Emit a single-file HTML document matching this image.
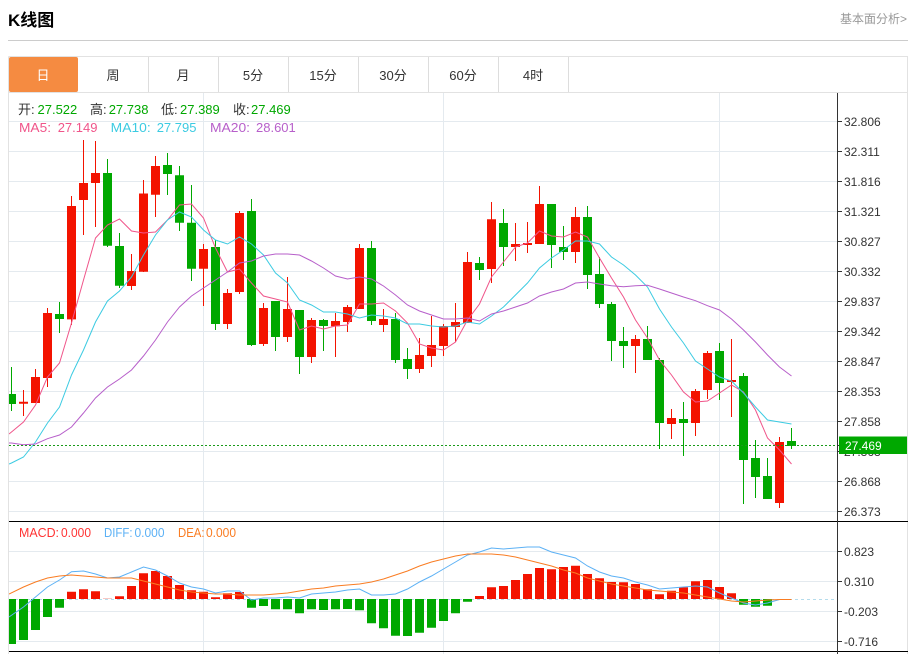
<!DOCTYPE html>
<html lang="zh"><head><meta charset="utf-8"><title>K线图</title>
<style>
html,body{margin:0;padding:0;background:#fff;width:914px;height:654px;overflow:hidden}
svg{display:block;position:absolute;left:0;top:0}
text{font-family:"Liberation Sans","Noto Sans CJK SC",sans-serif}
</style></head><body>
<svg width="914" height="654" viewBox="0 0 914 654" xmlns="http://www.w3.org/2000/svg">
<defs><clipPath id="c"><rect x="9" y="93" width="828" height="560"/></clipPath></defs>
<text x="8" y="26" font-size="17" font-weight="700" fill="#000">K线图</text>
<text x="840" y="23" font-size="12" fill="#999">基本面分析&gt;</text>
<path d="M8 40.5H908" stroke="#ccc" fill="none"/>
<path d="M8.5 56.5H907.5V654M8.5 56.5V654M9 92.5H908" stroke="#e2e2e2" fill="none"/>
<path d="M148.5 57V92M218.5 57V92M288.5 57V92M358.5 57V92M428.5 57V92M498.5 57V92M568.5 57V92" stroke="#ddd" fill="none"/>
<rect x="9" y="57" width="69" height="35" rx="2" fill="#f58b41"/>
<g font-size="13" text-anchor="middle" fill="#333">
<text x="43" y="80" fill="#fff">日</text><text x="113" y="80">周</text><text x="183" y="80">月</text><text x="253" y="80">5分</text><text x="323" y="80">15分</text><text x="393" y="80">30分</text><text x="463" y="80">60分</text><text x="533" y="80">4时</text>
</g>
<path stroke="#e4eaef" fill="none" d="M9 121.5H837M9 151.5H837M9 181.5H837M9 211.5H837M9 241.5H837M9 271.5H837M9 301.5H837M9 331.5H837M9 361.5H837M9 391.5H837M9 421.5H837M9 451.5H837M9 481.5H837M9 511.5H837M9 551.5H837M9 581.5H837M9 611.5H837M9 641.5H837M203.5 93V654M443.5 93V654M719.5 93V654"/>
<g clip-path="url(#c)">
<path stroke="#f31300" fill="none" d="M23.5 390V416M35.5 369V403M47.5 308V387M71.5 196V325M83.5 140V235M95.5 141V227M131.5 254V290M143.5 180V272M155.5 156V217M203.5 244V306M227.5 289V329M239.5 211V294M263.5 303V346M287.5 277V342M311.5 318V363M335.5 313V357M347.5 305V332M359.5 244V309M383.5 309V332M419.5 338V373M431.5 316V367M443.5 324V356M455.5 303V342M467.5 252V323M491.5 202V283M515.5 223V261M527.5 222V253M539.5 186V244M575.5 207V263M635.5 335V373M671.5 409V439M695.5 389V436M707.5 351V399M731.5 339V417M779.5 437V508"/>
<path stroke="#00a800" fill="none" d="M11.5 367V411M59.5 302V333M107.5 159V247M119.5 233V288M167.5 153V195M179.5 166V231M191.5 185V281M215.5 240V330M251.5 199V346M275.5 301V351M299.5 310V374M323.5 319V351M371.5 241V325M395.5 313V363M407.5 348V379M479.5 257V280M503.5 209V266M551.5 204V268M563.5 226V260M587.5 206V289M599.5 257V308M611.5 302V361M623.5 327V368M647.5 326V360M659.5 358V449M683.5 402V456M719.5 343V400M743.5 373V504M755.5 440V498M767.5 458V499M791.5 428V449"/>
<path fill="#f31300" d="M19 401.7h9v2h-9zM31 377h9v26h-9zM43 313h9v65h-9zM67 206h9v113.4h-9zM79 183h9v17h-9zM91 173h9v10h-9zM127 271h9v15h-9zM139 193.5h9v78.2h-9zM151 166h9v28.7h-9zM199 249h9v19.7h-9zM223 293h9v31h-9zM235 213h9v79h-9zM259 308h9v36h-9zM283 309h9v28h-9zM307 320h9v37h-9zM331 321h9v5.3h-9zM343 307h9v15h-9zM355 248h9v61h-9zM379 319h9v6h-9zM415 355h9v14h-9zM427 345h9v11h-9zM439 326h9v20h-9zM451 322h9v5h-9zM463 262h9v61h-9zM487 219.3h9v49.7h-9zM511 244h9v3h-9zM523 243h9v2h-9zM535 204h9v40h-9zM571 217h9v35h-9zM631 339h9v7h-9zM667 418h9v6h-9zM691 391h9v32h-9zM703 353h9v37h-9zM727 380h9v2h-9zM775 442h9v61h-9z"/>
<path fill="#00a800" d="M7 394h9v10h-9zM55 314h9v5h-9zM103 173h9v72.7h-9zM115 246h9v39.7h-9zM163 165h9v9h-9zM175 175.3h9v47.4h-9zM187 222.7h9v46h-9zM211 247h9v77h-9zM247 211h9v134h-9zM271 301h9v36h-9zM295 310h9v47h-9zM319 320h9v6h-9zM367 248h9v73h-9zM391 319h9v41h-9zM403 359h9v10h-9zM475 263h9v7h-9zM499 223h9v24h-9zM547 204h9v41h-9zM559 247h9v5h-9zM583 217h9v58h-9zM595 274h9v30h-9zM607 304h9v37h-9zM619 341h9v5h-9zM643 339h9v21h-9zM655 360h9v63h-9zM679 419h9v4h-9zM715 351h9v32h-9zM739 376h9v84h-9zM751 458h9v19h-9zM763 476h9v23h-9zM787 441h9v5h-9z"/>
<polyline fill="none" stroke="#f0558a" points="9,434 11.5,432 23.5,422 35.5,405 47.5,377 59.5,363 71.5,323 83.5,280 95.5,238 107.5,225 119.5,219 131.5,231 143.5,233 155.5,232 167.5,220 179.5,205 191.5,204 203.5,218 215.5,248 227.5,272 239.5,269 251.5,283 263.5,296 275.5,299 287.5,302 299.5,330 311.5,326 323.5,329 335.5,326 347.5,325 359.5,304 371.5,304 383.5,303 395.5,311 407.5,323 419.5,344 431.5,348 443.5,350 455.5,342 467.5,320 479.5,304 491.5,277 503.5,262 515.5,247 527.5,243 539.5,231 551.5,236 563.5,237 575.5,232 587.5,237 599.5,258 611.5,278 623.5,297 635.5,320 647.5,338 659.5,360 671.5,375 683.5,392 695.5,402 707.5,401 719.5,393 731.5,385 743.5,392 755.5,410 767.5,438 779.5,450 791.5,464"/>
<polyline fill="none" stroke="#3ccbe2" points="9,464 11.5,463 23.5,457 35.5,442 47.5,423 59.5,407 71.5,375 83.5,350 95.5,322 107.5,301 119.5,291 131.5,277 143.5,255 155.5,235 167.5,220 179.5,212 191.5,217 203.5,230 215.5,240 227.5,244 239.5,237 251.5,244 263.5,255 275.5,273 287.5,283 299.5,300 311.5,305 323.5,312 335.5,312 347.5,314 359.5,318 371.5,315 383.5,316 395.5,318 407.5,324 419.5,324 431.5,326 443.5,327 455.5,326 467.5,322 479.5,324 491.5,316 503.5,307 515.5,295 527.5,283 539.5,268 551.5,258 563.5,250 575.5,241 587.5,241 599.5,244 611.5,257 623.5,265 635.5,275 647.5,287 659.5,309 671.5,327 683.5,343 695.5,361 707.5,369 719.5,377 731.5,381 743.5,393 755.5,407 767.5,420 779.5,422 791.5,424"/>
<polyline fill="none" stroke="#b75fca" points="9,443 11.5,443 23.5,444.7 35.5,444 47.5,438.7 59.5,435 71.5,427 83.5,413 95.5,398 107.5,387 119.5,379 131.5,370 143.5,356 155.5,340 167.5,322 179.5,307 191.5,296 203.5,288 215.5,280 227.5,272 239.5,263 251.5,261 263.5,256 275.5,254 287.5,254 299.5,255 311.5,261 323.5,268 335.5,276 347.5,279 359.5,277 371.5,279 383.5,286 395.5,295 407.5,305 419.5,311 431.5,315 443.5,319 455.5,319 467.5,318 479.5,321 491.5,314 503.5,311 515.5,307 527.5,303 539.5,296 551.5,292 563.5,289 575.5,283 587.5,282 599.5,284 611.5,285.7 623.5,286.7 635.5,285.7 647.5,285.3 659.5,289 671.5,293 683.5,297 695.5,300.7 707.5,305.7 719.5,310 731.5,319 743.5,330 755.5,342 767.5,355 779.5,367 791.5,376"/>
<path d="M9 445.5H837" stroke="#1a9a1a" stroke-dasharray="2 2" fill="none"/>
<path d="M9 599.5H837" stroke="#b5dcec" stroke-dasharray="3 3" fill="none"/>
<path fill="#f31300" d="M67 591.7h9v7.3h-9zM79 589.3h9v9.7h-9zM91 591.3h9v7.7h-9zM115 596.3h9v2.7h-9zM127 586h9v13h-9zM139 573.3h9v25.7h-9zM151 571h9v28h-9zM163 576h9v23h-9zM175 585h9v14h-9zM187 590.3h9v8.7h-9zM199 591.7h9v7.3h-9zM211 597.3h9v1.7h-9zM223 593.3h9v5.7h-9zM235 592h9v7h-9zM475 596h9v3h-9zM487 587.3h9v11.7h-9zM499 586h9v13h-9zM511 580h9v19h-9zM523 574h9v25h-9zM535 568h9v31h-9zM547 569.3h9v29.7h-9zM559 567h9v32h-9zM571 565.7h9v33.3h-9zM583 574h9v25h-9zM595 578.3h9v20.7h-9zM607 582h9v17h-9zM619 582.3h9v16.7h-9zM631 584h9v15h-9zM643 589.3h9v9.7h-9zM655 594.3h9v4.7h-9zM667 590.7h9v8.3h-9zM679 587.3h9v11.7h-9zM691 581.3h9v17.7h-9zM703 580h9v19h-9zM715 587h9v12h-9zM727 593.3h9v5.7h-9z"/>
<path fill="#f8c8c4" d="M103 598h9v1h-9z"/>
<path fill="#00a800" d="M7 599h9v45h-9zM19 599h9v41h-9zM31 599h9v31h-9zM43 599h9v18h-9zM55 599h9v8.7h-9zM247 599h9v8.7h-9zM259 599h9v7h-9zM271 599h9v10.3h-9zM283 599h9v10.3h-9zM295 599h9v14.3h-9zM307 599h9v10.3h-9zM319 599h9v11h-9zM331 599h9v10.3h-9zM343 599h9v10h-9zM355 599h9v11.3h-9zM367 599h9v24.3h-9zM379 599h9v29.3h-9zM391 599h9v36.7h-9zM403 599h9v37h-9zM415 599h9v33.7h-9zM427 599h9v28.7h-9zM439 599h9v22h-9zM451 599h9v14.3h-9zM463 599h9v2.7h-9zM739 599h9v5.7h-9zM751 599h9v7.7h-9zM763 599h9v6.7h-9z"/>
<polyline fill="none" stroke="#5cb1f5" points="9,617 23.5,607 35.5,597 47.5,587 59.5,580 71.5,571.7 83.5,571 95.5,574 107.5,578 119.5,577 131.5,572 143.5,567 155.5,570 167.5,576 179.5,583 191.5,587 203.5,589 215.5,593 227.5,591 239.5,591 251.5,600 263.5,598 275.5,598 287.5,597 299.5,598 311.5,594 323.5,593 335.5,592 347.5,590 359.5,589 371.5,595 383.5,595 395.5,594 407.5,589 419.5,582 431.5,576 443.5,569 455.5,562 467.5,555 479.5,552 491.5,548 503.5,549 515.5,548 527.5,547 539.5,547 551.5,552 563.5,555 575.5,558 587.5,566 599.5,572 611.5,576 623.5,578 635.5,582 647.5,585 659.5,589 671.5,588 683.5,587 695.5,586 707.5,587 719.5,593 731.5,598 743.5,603 755.5,605 767.5,603 779.5,599.5 791.5,599.5"/>
<polyline fill="none" stroke="#f97c22" points="9,594 23.5,587 35.5,582 47.5,578 59.5,576 71.5,575 83.5,576 95.5,577 107.5,578 119.5,578 131.5,578 143.5,581 155.5,584 167.5,587 179.5,590 191.5,592 203.5,593 215.5,594 227.5,594 239.5,595 251.5,595 263.5,595 275.5,594 287.5,593 299.5,591 311.5,589 323.5,588 335.5,586 347.5,585 359.5,584 371.5,582 383.5,579 395.5,575 407.5,571 419.5,566 431.5,562 443.5,559 455.5,556 467.5,554 479.5,554 491.5,554 503.5,555 515.5,557 527.5,560 539.5,563 551.5,566 563.5,570 575.5,573 587.5,578 599.5,581 611.5,584 623.5,586 635.5,588 647.5,590 659.5,591 671.5,592 683.5,593 695.5,595 707.5,597 719.5,599 731.5,601 743.5,602 755.5,601 767.5,600 779.5,599.5 791.5,599.5"/>
</g>
<path stroke="#000" fill="none" d="M9 521.5H908M9 651.5H908"/>
<path stroke="#333" fill="none" d="M837.5 93V654M837 121.5h5M837 151.5h5M837 181.5h5M837 211.5h5M837 241.5h5M837 271.5h5M837 301.5h5M837 331.5h5M837 361.5h5M837 391.5h5M837 421.5h5M837 451.5h5M837 481.5h5M837 511.5h5M837 551.5h5M837 581.5h5M837 611.5h5M837 641.5h5"/>
<g font-size="12" fill="#333">
<text x="844" y="126">32.806</text><text x="844" y="156">32.311</text><text x="844" y="186">31.816</text><text x="844" y="216">31.321</text><text x="844" y="246">30.827</text><text x="844" y="276">30.332</text><text x="844" y="306">29.837</text><text x="844" y="336">29.342</text><text x="844" y="366">28.847</text><text x="844" y="396">28.353</text><text x="844" y="426">27.858</text><text x="844" y="456">27.363</text><text x="844" y="486">26.868</text><text x="844" y="516">26.373</text>
<text x="844" y="556">0.823</text><text x="844" y="586">0.310</text><text x="844" y="616">-0.203</text><text x="844" y="646">-0.716</text>
</g>
<path stroke="#333" d="M837 445.5h5" fill="none"/>
<rect x="839" y="436.5" width="68" height="17.5" fill="#00a800"/>
<text x="845" y="450" font-size="12" fill="#fff">27.469</text>
<g font-size="13">
<g fill="#333"><text x="18" y="114">开:</text><text x="90" y="114">高:</text><text x="161" y="114">低:</text><text x="233" y="114">收:</text></g>
<g fill="#00a800"><text x="37.5" y="114">27.522</text><text x="108.7" y="114">27.738</text><text x="180" y="114">27.389</text><text x="251" y="114">27.469</text></g>
<text x="19" y="132" fill="#f0558a" textLength="32" lengthAdjust="spacingAndGlyphs">MA5:</text><text x="57.7" y="132" fill="#f0558a">27.149</text>
<text x="110.7" y="132" fill="#3ccbe2" textLength="40" lengthAdjust="spacingAndGlyphs">MA10:</text><text x="156.7" y="132" fill="#3ccbe2">27.795</text>
<text x="210" y="132" fill="#b75fca" textLength="40" lengthAdjust="spacingAndGlyphs">MA20:</text><text x="256" y="132" fill="#b75fca">28.601</text>
<text x="19" y="537" fill="#f33" textLength="40" lengthAdjust="spacingAndGlyphs">MACD:</text><text x="61" y="537" fill="#f33" textLength="30" lengthAdjust="spacingAndGlyphs">0.000</text>
<text x="104" y="537" fill="#5cb1f5" textLength="28.5" lengthAdjust="spacingAndGlyphs">DIFF:</text><text x="134.5" y="537" fill="#5cb1f5" textLength="30" lengthAdjust="spacingAndGlyphs">0.000</text>
<text x="178" y="537" fill="#f97c22" textLength="26.5" lengthAdjust="spacingAndGlyphs">DEA:</text><text x="206" y="537" fill="#f97c22" textLength="30" lengthAdjust="spacingAndGlyphs">0.000</text>
</g>
</svg>
</body></html>
